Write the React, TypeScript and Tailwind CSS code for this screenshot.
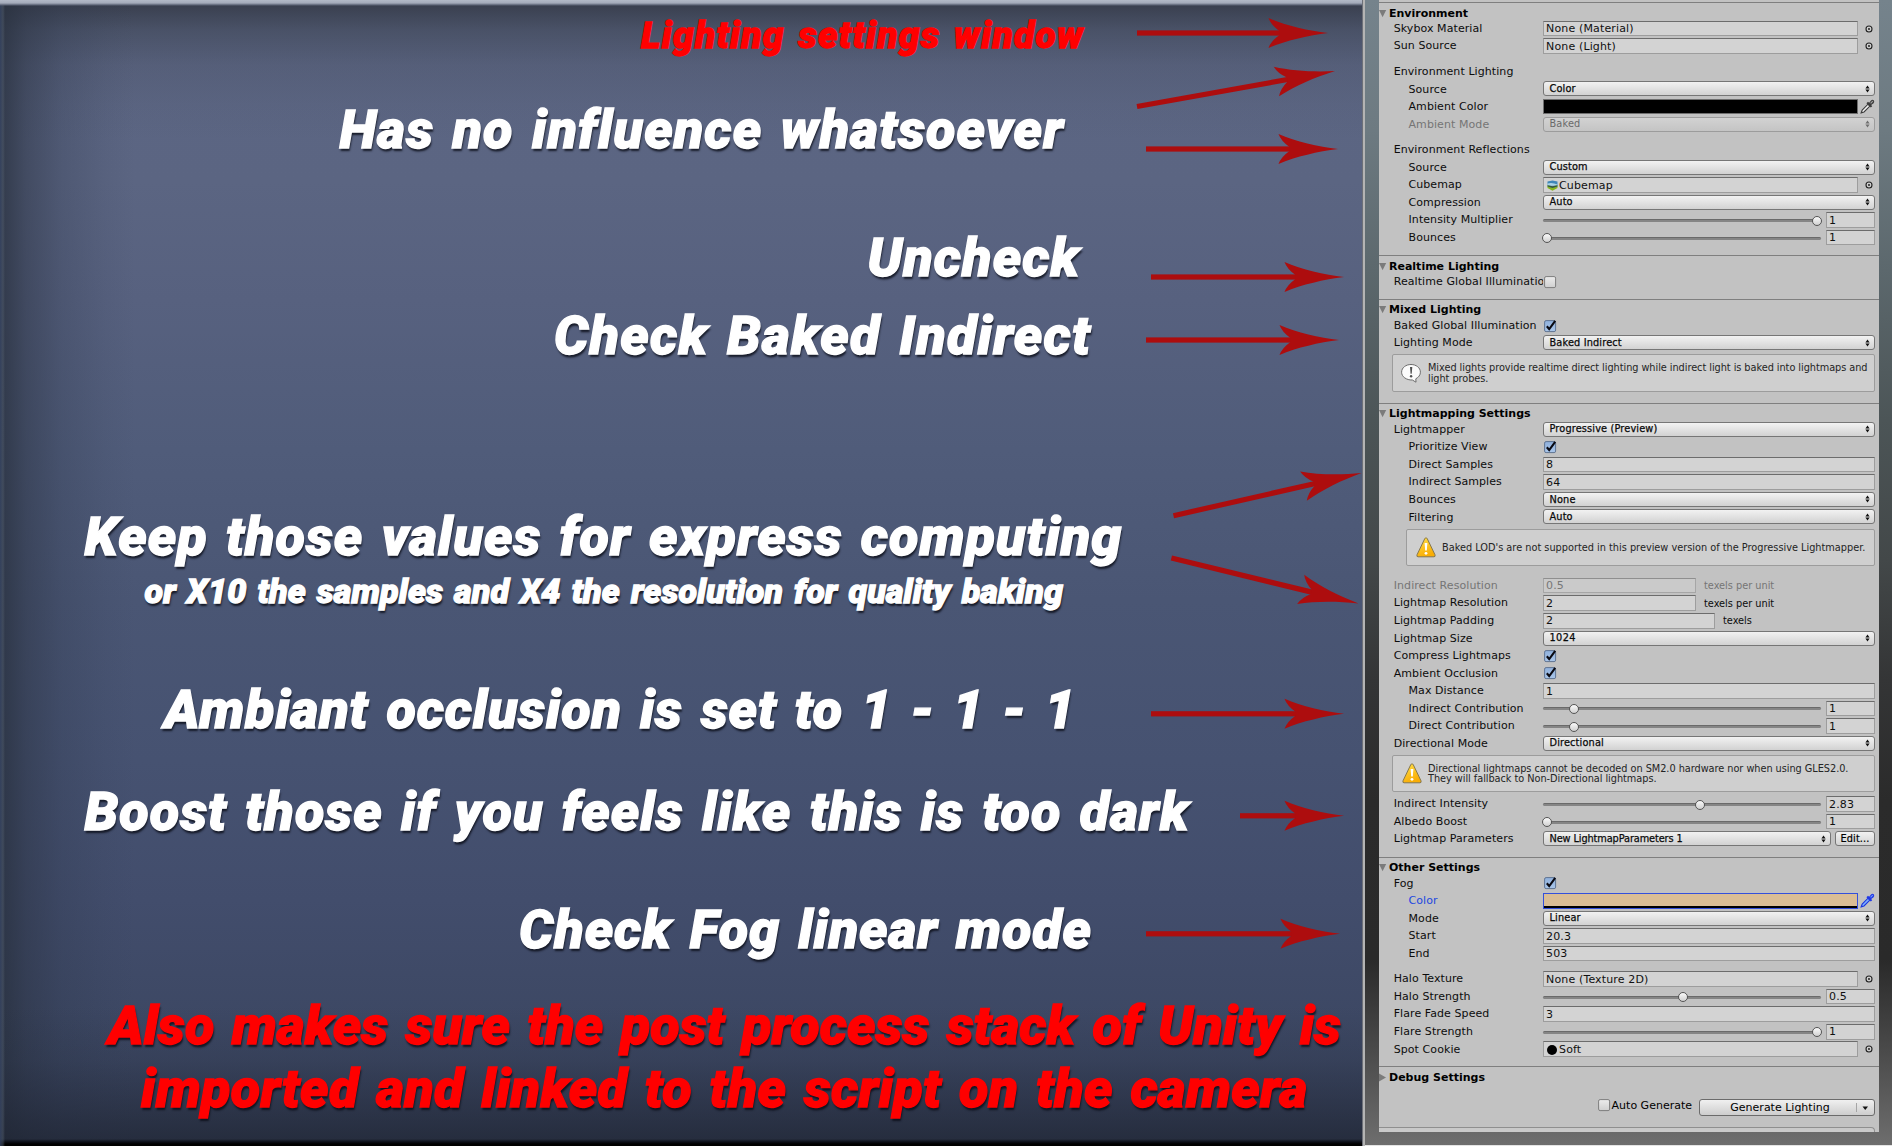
import React, { type ReactNode } from "react";

/* ---------- left side: annotations ---------- */

const BIG = "text-[54px] [word-spacing:4px] text-white";
const RED = "text-[54px] [word-spacing:4px] text-[#ff0000]";

const headlines: { text: string; cls: string }[] = [
  { text: "Lighting settings window", cls: "mt-[17px] ml-[641px] text-[37px] tracking-[1.3px] [word-spacing:3px] text-[#ff0000]" },
  { text: "Has no influence whatsoever", cls: `mt-[48.6px] ml-[339.5px] tracking-[1.05px] ${BIG}` },
  { text: "Uncheck", cls: `mt-[74px] ml-[867.5px] tracking-[1px] ${BIG}` },
  { text: "Check Baked Indirect", cls: `mt-[24px] ml-[554px] tracking-[1.2px] ${BIG}` },
  { text: "Keep those values for express computing", cls: `mt-[147.4px] ml-[84.5px] tracking-[0.97px] ${BIG}` },
  { text: "or X10 the samples and X4 the resolution for quality baking", cls: "mt-[10.4px] ml-[144.5px] text-[34px] tracking-[0.13px] [word-spacing:2.5px] text-white" },
  { text: "Ambiant occlusion is set to 1 - 1 - 1", cls: `mt-[74.2px] ml-[164px] tracking-[0.8px] ${BIG}` },
  { text: "Boost those if you feels like this is too dark", cls: `mt-[48px] ml-[84.5px] tracking-[1px] ${BIG}` },
  { text: "Check Fog linear mode", cls: `mt-[64px] ml-[519px] tracking-[0.85px] ${BIG}` },
  { text: "Also makes sure the post process stack of Unity is", cls: `mt-[42px] ml-[108px] tracking-[0.01px] ${RED}` },
  { text: "imported and linked to the script on the camera", cls: `mt-[9px] ml-[141px] tracking-[0.25px] ${RED}` },
];

// tail x, tail y, tip x, tip y
const arrows: [number, number, number, number][] = [
  [1137, 33, 1328, 33],
  [1137, 106.5, 1335, 71],
  [1146, 149, 1338, 149],
  [1151, 277, 1344, 277],
  [1146, 340, 1339, 340],
  [1173.5, 515.7, 1361.5, 473],
  [1171.4, 558, 1358.5, 603.5],
  [1151, 713.8, 1344, 713.8],
  [1240, 815.8, 1344, 815.8],
  [1146, 933.8, 1340, 933.8],
];

function Arrows() {
  return (
    <svg className="absolute inset-0" width="1362" height="1146" viewBox="0 0 1362 1146" fill="#ad0d0e">
      {arrows.map(([x1, y1, x2, y2], i) => {
        const len = Math.hypot(x2 - x1, y2 - y1);
        const deg = (Math.atan2(y2 - y1, x2 - x1) * 180) / Math.PI;
        return (
          <g key={i} transform={`translate(${x2} ${y2}) rotate(${deg})`}>
            <rect x={-len} y={-2.6} width={len - 44} height={5.2} />
            <path d="M0 0 C-20 -2.5 -42 -7.5 -59.5 -15 Q-57 -8 -48.5 -2 V2 Q-57 8 -59.5 15 C-42 7.5 -20 2.5 0 0Z" />
          </g>
        );
      })}
    </svg>
  );
}

function Annotations() {
  return (
    <div className="relative h-full w-[1362px] overflow-hidden bg-[linear-gradient(180deg,#5c6684_0px,#5b6582_180px,#57617f_300px,#505c7a_450px,#4a5674_600px,#465271_760px,#424d6c_900px,#3d4864_1020px,#374159_1146px)]">
      <div className="absolute inset-0 bg-[linear-gradient(180deg,rgba(40,44,52,0.66)_5px,rgba(48,54,64,0.42)_30px,rgba(60,66,80,0.2)_65px,rgba(60,66,80,0.06)_105px,transparent_140px)]" />
      <div className="absolute inset-0 bg-[linear-gradient(90deg,rgba(40,48,62,0.75)_5px,rgba(42,50,66,0.5)_26px,rgba(44,54,74,0.26)_62px,rgba(44,54,74,0.08)_105px,transparent_135px)]" />
      <div className="absolute inset-0 bg-[linear-gradient(0deg,rgba(30,36,50,0.7)_5px,rgba(32,38,54,0.44)_45px,rgba(36,44,62,0.2)_85px,transparent_140px)]" />
      <div className="absolute inset-x-0 bottom-0 h-[7px] bg-[linear-gradient(0deg,#000_2px,#0b0e16_4px,transparent)]" />
      <div className="absolute inset-y-0 left-0 w-[5px] bg-[linear-gradient(90deg,rgba(52,66,96,0.85),rgba(84,96,112,0.45)_3px,transparent)]" />
      <div className="absolute inset-x-0 top-0 h-[6px] bg-[linear-gradient(180deg,#b3bac8_0px,#a4abba_3px,#5b6375_5px,transparent)]" />
      <div className="relative flex flex-col items-start font-['Roboto',sans-serif] leading-none font-black italic [-webkit-text-stroke:1.3px_currentColor]">
        {headlines.map((h) => (
          <div
            key={h.text}
            className={`h-[1em] leading-none whitespace-nowrap ${h.cls} ${
              h.cls.includes("37px") ? "" : "[text-shadow:1px_3px_2px_rgba(10,12,22,0.8)]"
            }`}
          >
            {h.text}
          </div>
        ))}
      </div>
      <Arrows />
    </div>
  );
}

/* ---------- right side: inspector ---------- */

function Row({ label, indent, dim, active, children }: { label: string; indent?: boolean; dim?: boolean; active?: boolean; children?: ReactNode }) {
  return (
    <div className={`flex h-[17.55px] items-center pr-[4px] ${dim ? "text-[#757575]" : "text-[#0c0c0c]"}`}>
      <div
        className={`h-[17px] shrink-0 overflow-hidden pt-[0.8px] leading-[16px] tracking-[0.08px] whitespace-nowrap ${children ? "w-[164px]" : "w-[300px]"} ${
          indent ? "pl-[29.5px]" : "pl-[14.7px]"
        } ${active ? "text-[#1d47e0]" : ""}`}
      >
        {label}
      </div>
      {children}
    </div>
  );
}

function Field({ value, width = "flex-1", dim, icon }: { value: string; width?: string; dim?: boolean; icon?: ReactNode }) {
  return (
    <div
      className={`flex h-[15.6px] items-center border border-t-[1.5px] pt-[0.5px] pl-[2px] leading-none tracking-[0.15px] whitespace-nowrap ${width} ${
        dim ? "border-[#a6a6a6] border-t-[#8f8f8f] bg-[#cacaca] text-[#777]" : "border-[#9d9d9d] border-t-[#6c6c6c] bg-[#d3d3d3] text-[#101010]"
      }`}
    >
      {icon}
      {value}
    </div>
  );
}

function Picker() {
  return (
    <svg className="ml-[5.5px] shrink-0" width="10" height="10" viewBox="0 0 10 10">
      <circle cx="5" cy="5" r="3" fill="#cfcfcf" stroke="#222" strokeWidth="1.1" />
      <circle cx="5" cy="5" r="0.9" fill="#111" />
    </svg>
  );
}

function ObjectField({ value, icon }: { value: string; icon?: ReactNode }) {
  return (
    <>
      <Field value={value} width="w-[315px]" icon={icon} />
      <Picker />
    </>
  );
}

function UpDown({ dim }: { dim?: boolean }) {
  return (
    <svg width="5" height="8" viewBox="0 0 5 8" fill={dim ? "#6f6f6f" : "#111"}>
      <path d="M2.5 0.4 L4.6 3.4 H0.4Z M2.5 7.6 L4.6 4.6 H0.4Z" />
    </svg>
  );
}

function Popup({ value, dim, width = "flex-1", tracking = "tracking-[0.15px]" }: { value: string; dim?: boolean; width?: string; tracking?: string }) {
  return (
    <div
      className={`mt-[-0.5px] flex h-[15px] items-center justify-between rounded-[3px] border pr-[4px] pl-[5.5px] text-[9.75px] leading-none ${tracking} ${width} ${
        dim
          ? "border-[#9c9c9c] bg-[linear-gradient(180deg,#d2d2d2,#c4c4c4)] text-[#6a6a6a]"
          : "border-[#767676] bg-[linear-gradient(180deg,#f2f2f2,#d2d2d2)] text-[#0a0a0a] [-webkit-text-stroke:0.25px_currentColor]"
      }`}
    >
      <span className="whitespace-nowrap">{value}</span>
      <UpDown dim={dim} />
    </div>
  );
}

function Check({ on }: { on?: boolean }) {
  return (
    <svg className="ml-[1px] shrink-0" width="14" height="14" viewBox="0 0 14 14">
      <defs>
        <linearGradient id={on ? "cOn" : "cOff"} x1="0" y1="0" x2="0" y2="1">
          <stop offset="0" stopColor={on ? "#8fb0dc" : "#ececec"} />
          <stop offset="1" stopColor={on ? "#a9c6ea" : "#cfcfcf"} />
        </linearGradient>
      </defs>
      <rect x="0.6" y="1.6" width="11" height="11" rx="1.5" fill={`url(#${on ? "cOn" : "cOff"})`} stroke={on ? "#5f7391" : "#7d7d7d"} />
      {on && <path d="M2.8 7.2 L5.2 10 L11.2 1.9" fill="none" stroke="#0a0a12" strokeWidth="2.1" />}
    </svg>
  );
}

function Slider({ at, value }: { at: string; value: string }) {
  return (
    <>
      <div className="relative mt-[1px] mr-[5px] h-[3px] w-[278px] rounded-full border-t border-[#6a6a6a] bg-[#858585]">
        <div className={`absolute top-[-4.5px] h-[10px] w-[10px] rounded-full border border-[#555] bg-[linear-gradient(180deg,#fafafa,#d0d0d0)] ${at}`} />
      </div>
      <Field value={value} />
    </>
  );
}

function Dropper({ blue }: { blue?: boolean }) {
  return (
    <svg className="ml-[2px] shrink-0" width="15" height="15" viewBox="0 0 15 15">
      <path d="M1.2 13.8 L2.2 11 L8 5.2 L9.9 7.1 L4 12.9Z" fill={blue ? "#7fb0ff" : "#f2f2f2"} stroke={blue ? "#1a35dd" : "#3a3a3a"} strokeWidth="1.1" />
      <path d="M6.4 4.2 L8 2.8 L9.2 3.8 L11 1.4 Q12.4 0.2 13.8 1.3 Q14.8 2.6 13.6 4.2 L11.2 6 L12.2 7.2 L10.8 8.6Z" fill={blue ? "#2038e6" : "#3d3d3d"} />
      <path d="M10.6 4.4 L12.8 2.2" stroke={blue ? "#6f9bff" : "#a5a5a5"} strokeWidth="1.1" />
    </svg>
  );
}

function Warning() {
  return (
    <svg className="ml-[1px] shrink-0" width="20" height="21" viewBox="0 0 20 21">
      <defs>
        <linearGradient id="warn" x1="0" y1="0" x2="0.4" y2="1">
          <stop offset="0" stopColor="#ffe04a" />
          <stop offset="1" stopColor="#f9ad05" />
        </linearGradient>
      </defs>
      <path d="M10 0.8 Q10.8 0.8 11.3 1.8 L19 17.8 Q19.6 19.8 18 19.8 H2 Q0.4 19.8 1 17.8 L8.7 1.8 Q9.2 0.8 10 0.8Z" fill="url(#warn)" stroke="#85774f" strokeWidth="1" />
      <path d="M8.6 6 H11.4 L10.8 13.6 H9.2Z" fill="#fff" />
      <circle cx="10" cy="16.3" r="1.4" fill="#fff" />
    </svg>
  );
}

function Info() {
  return (
    <svg className="mr-[1px] shrink-0" width="20" height="20" viewBox="0 0 20 20">
      <path d="M10 1.5 C15 1.5 19.4 4.6 19.4 9.2 C19.4 12.2 17.4 14.4 14.8 15.8 L15 19.2 L11.4 17 C5.4 17.2 0.6 13.8 0.6 9.2 C0.6 4.6 5 1.5 10 1.5Z" fill="#fbfbfb" stroke="#6c6c6c" strokeWidth="1" />
      <path d="M9 4 H11.3 L10.7 10.8 H9.6Z" fill="#505050" />
      <circle cx="10.1" cy="13.2" r="1.2" fill="#505050" />
    </svg>
  );
}

function Help({ icon, cls, children }: { icon: ReactNode; cls: string; children: ReactNode }) {
  return (
    <div className={`mr-[4px] flex items-center gap-[6px] rounded-[2px] border border-[#9c9c9c] bg-[#cfcfcf] pl-[8px] text-[9.75px] leading-[10.7px] whitespace-nowrap text-[#242424] ${cls}`}>
      {icon}
      <div className="pt-[1.5px]">{children}</div>
    </div>
  );
}

function Section({ title, closed, cls = "", children }: { title: string; closed?: boolean; cls?: string; children?: ReactNode }) {
  return (
    <div className={cls}>
      <div className="flex h-[17.5px] items-center border-t border-[#7f7f7f] pt-[3px]">
        <svg className="mt-[1px] shrink-0" width="10" height="10" viewBox="0 0 10 10" fill="#7b7b7b">
          {closed ? <path d="M0 0.6 L7 4.6 L0 8.6Z" /> : <path d="M0 1 H7.2 L3.6 8.2Z" />}
        </svg>
        <span className="font-bold whitespace-nowrap text-black">{title}</span>
      </div>
      {children}
    </div>
  );
}

function CubeIcon() {
  return (
    <svg className="mr-[1px] ml-[1px] shrink-0" width="11" height="11" viewBox="0 0 11 11">
      <path d="M0.5 1.5 L5.5 0.5 L10.5 1.5 V5.5 H0.5Z" fill="#3f87b8" />
      <path d="M0.5 3.6 Q5 2 10.5 4.6 V5.6 H0.5Z" fill="#a9d3e6" />
      <path d="M0.5 5.4 L5.5 6.2 L10.5 5.4 V8 L5.5 10.8 L0.5 8Z" fill="#86b51f" />
      <path d="M0.5 5.2 L5.5 6.2 L10.5 5.2 V6.6 L5.5 8 L0.5 6.6Z" fill="#33574a" />
    </svg>
  );
}

function Inspector() {
  return (
    <div className="h-[1132px] w-[500px] overflow-hidden bg-[#c2c2c2] pt-[2.3px] font-['DejaVu_Sans',Verdana,sans-serif] text-[11px] leading-none">
      <Section title="Environment" cls="pb-[8.9px]">
        <Row label="Skybox Material"><ObjectField value="None (Material)" /></Row>
        <Row label="Sun Source"><ObjectField value="None (Light)" /></Row>
        <div className="h-[8px]" />
        <Row label="Environment Lighting" />
        <Row label="Source" indent><Popup value="Color" /></Row>
        <Row label="Ambient Color" indent>
          <div className="h-[15.4px] w-[315px] border border-[#6f6f6f] bg-black" />
          <Dropper />
        </Row>
        <Row label="Ambient Mode" indent dim><Popup value="Baked" dim /></Row>
        <div className="h-[8px]" />
        <Row label="Environment Reflections" />
        <Row label="Source" indent><Popup value="Custom" /></Row>
        <Row label="Cubemap" indent><ObjectField value="Cubemap" icon={<CubeIcon />} /></Row>
        <Row label="Compression" indent><Popup value="Auto" /></Row>
        <Row label="Intensity Multiplier" indent><Slider at="left-[269px]" value="1" /></Row>
        <Row label="Bounces" indent><Slider at="left-[-1px]" value="1" /></Row>
      </Section>

      <Section title="Realtime Lighting" cls="pb-[8.95px]">
        <Row label="Realtime Global Illumination"><Check /></Row>
      </Section>

      <Section title="Mixed Lighting" cls="pb-[11.7px]">
        <Row label="Baked Global Illumination"><Check on /></Row>
        <Row label="Lighting Mode"><Popup value="Baked Indirect" /></Row>
        <Help icon={<Info />} cls="mt-[2.4px] ml-[13px] h-[37.3px] tracking-[-0.05px]">
          Mixed lights provide realtime direct lighting while indirect light is baked into lightmaps and
          <br />
          light probes.
        </Help>
      </Section>

      <Section title="Lightmapping Settings" cls="pb-[9.15px]">
        <Row label="Lightmapper"><Popup value="Progressive (Preview)" /></Row>
        <Row label="Prioritize View" indent><Check on /></Row>
        <Row label="Direct Samples" indent><Field value="8" /></Row>
        <Row label="Indirect Samples" indent><Field value="64" /></Row>
        <Row label="Bounces" indent><Popup value="None" /></Row>
        <Row label="Filtering" indent><Popup value="Auto" /></Row>
        <Help icon={<Warning />} cls="mt-[3.2px] mb-[11.2px] ml-[27px] h-[36.5px]">
          Baked LOD's are not supported in this preview version of the Progressive Lightmapper.
        </Help>
        <Row label="Indirect Resolution" dim>
          <Field value="0.5" width="w-[153px]" dim />
          <span className="ml-[8px] pt-[1px] text-[9.75px]">texels per unit</span>
        </Row>
        <Row label="Lightmap Resolution">
          <Field value="2" width="w-[153px]" />
          <span className="ml-[8px] pt-[1px] text-[9.75px]">texels per unit</span>
        </Row>
        <Row label="Lightmap Padding">
          <Field value="2" width="w-[172px]" />
          <span className="ml-[8px] pt-[1px] text-[9.75px]">texels</span>
        </Row>
        <Row label="Lightmap Size"><Popup value="1024" tracking="tracking-[0.4px]" /></Row>
        <Row label="Compress Lightmaps"><Check on /></Row>
        <Row label="Ambient Occlusion"><Check on /></Row>
        <Row label="Max Distance" indent><Field value="1" /></Row>
        <Row label="Indirect Contribution" indent><Slider at="left-[26px]" value="1" /></Row>
        <Row label="Direct Contribution" indent><Slider at="left-[26px]" value="1" /></Row>
        <Row label="Directional Mode"><Popup value="Directional" /></Row>
        <Help icon={<Warning />} cls="mt-[2.8px] mb-[3.2px] ml-[13px] h-[37px] tracking-[-0.04px]">
          Directional lightmaps cannot be decoded on SM2.0 hardware nor when using GLES2.0.
          <br />
          They will fallback to Non-Directional lightmaps.
        </Help>
        <Row label="Indirect Intensity"><Slider at="left-[152px]" value="2.83" /></Row>
        <Row label="Albedo Boost"><Slider at="left-[-1px]" value="1" /></Row>
        <Row label="Lightmap Parameters">
          <Popup value="New LightmapParameters 1" width="w-[288px]" tracking="tracking-[-0.1px]" />
          <div className="mt-[-0.5px] ml-[4px] flex h-[15px] flex-1 items-center justify-center rounded-[3px] border border-[#767676] bg-[linear-gradient(180deg,#f2f2f2,#d2d2d2)] text-[9.75px] tracking-[0.15px] text-black [-webkit-text-stroke:0.2px_currentColor]">
            Edit...
          </div>
        </Row>
      </Section>

      <Section title="Other Settings" cls="pb-[8.4px]">
        <Row label="Fog"><Check on /></Row>
        <Row label="Color" indent active>
          <div className="flex h-[15.6px] w-[315px] flex-col justify-end border border-[#3350dc] bg-[#d9bd95]">
            <div className="h-[2px] bg-black" />
          </div>
          <Dropper blue />
        </Row>
        <Row label="Mode" indent><Popup value="Linear" /></Row>
        <Row label="Start" indent><Field value="20.3" /></Row>
        <Row label="End" indent><Field value="503" /></Row>
        <div className="h-[8px]" />
        <Row label="Halo Texture"><ObjectField value="None (Texture 2D)" /></Row>
        <Row label="Halo Strength"><Slider at="left-[134.5px]" value="0.5" /></Row>
        <Row label="Flare Fade Speed"><Field value="3" /></Row>
        <Row label="Flare Strength"><Slider at="left-[269px]" value="1" /></Row>
        <Row label="Spot Cookie">
          <ObjectField value="Soft" icon={<span className="mr-[2px] ml-[1px] h-[10px] w-[10px] rounded-full bg-black" />} />
        </Row>
      </Section>

      <Section title="Debug Settings" closed />

      <div className="mt-[15px] flex h-[17px] justify-end pr-[4px]">
        <div className="mt-[-1px] flex items-start">
          <Check />
          <span className="leading-[16px]">Auto Generate</span>
        </div>
        <div className="ml-[7px] flex w-[176px] rounded-[3px] border border-[#6b6b6b] bg-[linear-gradient(180deg,#f0f0f0,#cdcdcd)]">
          <div className="my-[3px] flex flex-1 items-center justify-center border-r border-[#a5a5a5] pt-[1px] pl-[4px]">Generate Lighting</div>
          <svg width="17" height="15" viewBox="0 0 17 15">
            <path d="M5.5 6.5 H11 L8.25 10Z" fill="#111" />
          </svg>
        </div>
      </div>
      <div className="mt-[11px] mr-[4px] h-[8px] rounded-tr-[4px] border-t border-r border-[#8f8f8f] bg-[#c9c9c9]" />
    </div>
  );
}

export default function App() {
  return (
    <div className="flex h-[1146px] w-[1892px] overflow-hidden bg-black">
      <Annotations />
      <div className="w-[3px] border-l border-[#6d7078] bg-[#b4b4b4]" />
      <div className="flex flex-1 border-b border-[#e4e4e4] bg-[linear-gradient(180deg,#75838c_0px,#6d7a81_130px,#5c686d_270px,#4c5557_420px,#434849_560px,#343536_680px,#2b2b2b_800px,#2a2a2a_960px,#4a4a4a_1050px,#666_1125px,#6e6e6e_1146px)] pl-[14px]">
        <Inspector />
      </div>
    </div>
  );
}
